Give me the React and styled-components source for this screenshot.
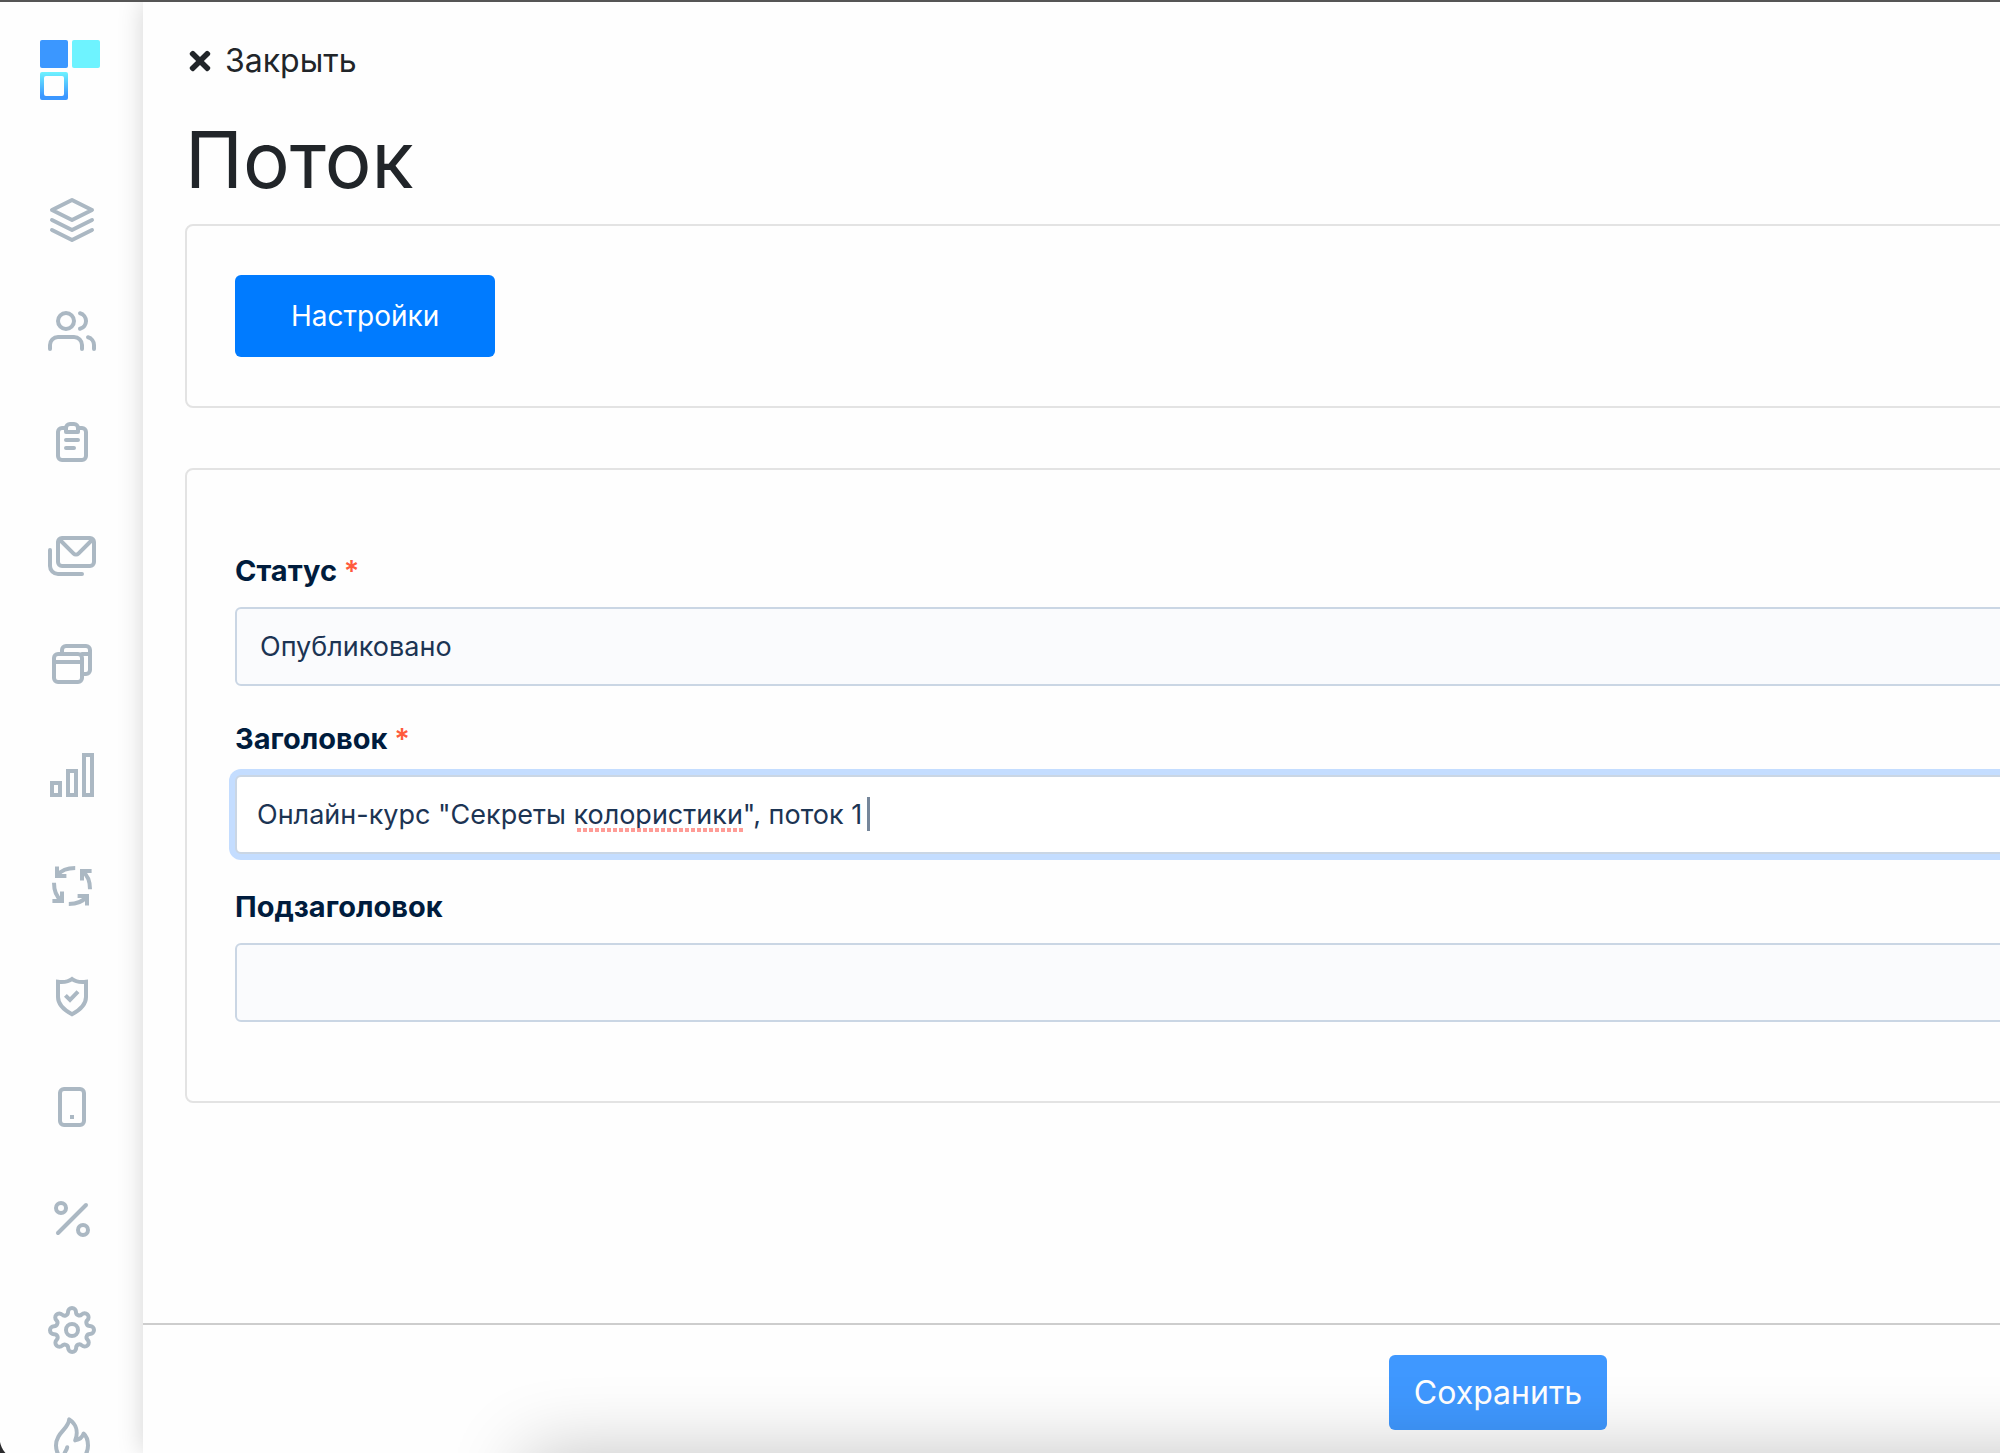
import React, { useState } from "react";
import styled, { createGlobalStyle } from "styled-components";
import { FiLayers, FiPercent, FiSettings, FiUsers } from "react-icons/fi";
import { FaTimes } from "react-icons/fa";

const GlobalStyle = createGlobalStyle`
  * {
    box-sizing: border-box;
  }

  body {
    margin: 0;
    overflow: hidden;
    background: #fefefe;
    color: #212529;
    font-family: Inter, "Liberation Sans", sans-serif;
  }
`;

const Icon = ({ children, cap = "round", join = "round" }) => (
  <svg
    viewBox="0 0 24 24"
    fill="none"
    stroke="currentColor"
    strokeWidth="2"
    strokeLinecap={cap}
    strokeLinejoin={join}
    aria-hidden="true"
  >
    {children}
  </svg>
);

const ClipboardIcon = () => (
  <Icon>
    <path d="M9 5H7a2 2 0 0 0-2 2v12a2 2 0 0 0 2 2h10a2 2 0 0 0 2-2V7a2 2 0 0 0-2-2h-2" />
    <path d="M9 7V5a2 2 0 0 1 2-2h2a2 2 0 0 1 2 2v2z" />
    <path d="M9 11h6M9 15h4" />
  </Icon>
);

const MailsIcon = () => (
  <Icon>
    <rect x="5" y="4.5" width="18" height="14" rx="2" />
    <path d="M6 5.5l6.8 6.8a1.7 1.7 0 0 0 2.4 0L22 5.5" />
    <path d="M1 10.5v8a4 4 0 0 0 4 4h12" />
  </Icon>
);

const WindowsIcon = () => (
  <Icon>
    <rect x="3" y="7" width="14" height="14" rx="2" />
    <path d="M3 11h14M17 7h4" />
    <path d="M7 7V5a2 2 0 0 1 2-2h10a2 2 0 0 1 2 2v10a2 2 0 0 1-2 2h-2" />
  </Icon>
);

const ChartIcon = () => (
  <Icon join="miter">
    <rect x="2" y="16" width="4" height="6" />
    <rect x="10" y="10" width="4" height="12" />
    <rect x="18" y="2" width="4" height="20" />
  </Icon>
);

const CycleIcon = () => (
  <Icon cap="butt" join="miter">
    {[0, 90, 180, 270].map((angle) => (
      <g key={angle} transform={`rotate(${angle} 12 12)`}>
        <path d="M4.5 2.2V7H9.2" />
        <path d="M4.8 6.6C6.6 4.2 9.8 3 13.6 3" />
      </g>
    ))}
  </Icon>
);

const ShieldIcon = () => (
  <Icon cap="butt" join="miter">
    <path d="M12 3C10.4 4.3 8 4.7 5 4.4V12c0 3.8 2.8 6.4 7 8.6 4.2-2.2 7-4.8 7-8.6V4.4C16 4.7 13.6 4.3 12 3z" />
    <path d="M8.700 11.200l2.300 2.300 4-4.200" />
  </Icon>
);

const PhoneIcon = () => (
  <Icon>
    <rect x="6" y="2.5" width="12" height="18" rx="2" />
    <rect x="11" y="15.5" width="2" height="2" fill="currentColor" stroke="none" />
  </Icon>
);

const FlameIcon = () => (
  <Icon>
    <path d="M10.6 1.2C10.4 6 4 7.700 4 14.300 4 19.200 7.500 22.500 12 22.500s8-3.300 8-8.200c0-2.500-.9-4.900-2.200-6-.6 1.800-2 3-4.200 3.400C15.200 7.500 14.200 3.500 10.600 1.200z" />
    <path d="M9.600 15.100C9.400 16.800 8 17.500 8 19.500c0 1.800 1.700 3 4 3" />
  </Icon>
);

const menu = [
  { label: "Курсы", icon: FiLayers },
  { label: "Пользователи", icon: FiUsers },
  { label: "Задания", icon: ClipboardIcon },
  { label: "Рассылки", icon: MailsIcon },
  { label: "Страницы", icon: WindowsIcon },
  { label: "Статистика", icon: ChartIcon },
  { label: "Процессы", icon: CycleIcon },
  { label: "Доступ", icon: ShieldIcon },
  { label: "Приложение", icon: PhoneIcon },
  { label: "Скидки", icon: FiPercent },
  { label: "Настройки", icon: FiSettings },
  { label: "Активность", icon: FlameIcon },
];

const Logo = () => (
  <LogoLink href="#" aria-label="Главная">
    <svg width="60" height="60" viewBox="0 0 60 60" aria-hidden="true">
      <defs>
        <linearGradient id="logoFrame" x1="0" y1="0" x2="0" y2="1">
          <stop offset="0" stopColor="#6ef3ff" />
          <stop offset="0.85" stopColor="#3b97ff" />
        </linearGradient>
      </defs>
      <rect width="28" height="28" rx="2" fill="#3b97ff" />
      <rect x="32" width="28" height="28" rx="2" fill="#6ef3ff" />
      <path
        fill="url(#logoFrame)"
        fillRule="evenodd"
        d="M2 32h24a2 2 0 0 1 2 2v24a2 2 0 0 1-2 2H2a2 2 0 0 1-2-2V34a2 2 0 0 1 2-2zm4 4a2 2 0 0 0-2 2v16a2 2 0 0 0 2 2h16a2 2 0 0 0 2-2V38a2 2 0 0 0-2-2z"
      />
    </svg>
  </LogoLink>
);

export default function App() {
  const [status, setStatus] = useState("published");
  const [title, setTitle] = useState('Онлайн-курс "Секреты колористики", поток 1');
  const [subtitle, setSubtitle] = useState("");

  return (
    <>
      <GlobalStyle />
      <Wrapper>
        <Sidebar>
          <Logo />
          <Menu>
            {menu.map(({ label, icon: MenuIcon }) => (
              <MenuLink href="#" key={label} aria-label={label}>
                <MenuIcon />
              </MenuLink>
            ))}
          </Menu>
        </Sidebar>

        <Page>
          <Content>
            <CloseLink href="#">
              <FaTimes />
              Закрыть
            </CloseLink>
            <Title>Поток</Title>

            <Card>
              <SettingsButton type="button">Настройки</SettingsButton>
            </Card>

            <FormCard id="stream" onSubmit={(e) => e.preventDefault()}>
              <Field>
                <Label htmlFor="status">
                  Статус <Required>*</Required>
                </Label>
                <Select
                  id="status"
                  value={status}
                  onChange={(e) => setStatus(e.target.value)}
                >
                  <option value="published">Опубликовано</option>
                </Select>
              </Field>

              <Field>
                <Label htmlFor="title">
                  Заголовок <Required>*</Required>
                </Label>
                <InputBox>
                  <Input
                    id="title"
                    $active
                    spellCheck={false}
                    value={title}
                    onChange={(e) => setTitle(e.target.value)}
                  />
                  <SpellMark />
                  <Caret />
                </InputBox>
              </Field>

              <Field>
                <Label htmlFor="subtitle">Подзаголовок</Label>
                <Input
                  id="subtitle"
                  value={subtitle}
                  onChange={(e) => setSubtitle(e.target.value)}
                />
              </Field>
            </FormCard>
          </Content>

          <Footer>
            <SaveButton type="submit" form="stream">
              Сохранить
            </SaveButton>
          </Footer>
        </Page>
      </Wrapper>
      <WindowShadow />
    </>
  );
}

const Wrapper = styled.div`
  position: relative;
  display: flex;
  height: 100vh;
  overflow: hidden;
  border-top: 2px solid #555;

  /* rounded corner of the window */
  &::after {
    content: "";
    position: absolute;
    left: 0;
    bottom: 0;
    width: 24px;
    height: 16px;
    background: radial-gradient(circle at 24px 0, transparent 24px, #2b2b2d 25px);
  }
`;

const Sidebar = styled.aside`
  flex: none;
  width: 143px;
  padding-top: 38px;
  overflow: hidden;
`;

const LogoLink = styled.a`
  display: block;
  width: 60px;
  height: 60px;
  margin: 0 auto 96px 40px;
`;

const Menu = styled.nav`
  display: flex;
  flex-direction: column;
  align-items: center;
  gap: 63px;
`;

const MenuLink = styled.a`
  width: 48px;
  height: 48px;
  color: #abb8c3;

  svg {
    display: block;
    width: 48px;
    height: 48px;
  }
`;

/* the editor is wider than the window and is cut off on the right */
const Page = styled.main`
  position: relative;
  flex: none;
  display: flex;
  flex-direction: column;
  width: calc(100% + 710px);
  background: #fefefe;
  box-shadow: 0 0 24px rgba(0, 0, 0, 0.17);
`;

const Content = styled.div`
  flex: 1;
  padding: 34px 42px 0;
`;

const CloseLink = styled.a`
  display: flex;
  align-items: center;
  gap: 10px;
  width: max-content;
  color: #212529;
  font-size: 32px;
  line-height: 50px;
  text-decoration: none;

  svg {
    font-size: 30px;
  }
`;

const Title = styled.h1`
  margin: 26px 0 16px;
  font-size: 78px;
  font-weight: 400;
  line-height: 96px;
`;

const Card = styled.section`
  padding: 49px 48px;
  border: 2px solid #e3e3e3;
  border-radius: 8px;
`;

const FormCard = styled.form`
  display: flex;
  flex-direction: column;
  gap: 33px;
  margin-top: 60px;
  padding: 81px 48px 79px;
  border: 2px solid #e3e3e3;
  border-radius: 8px;
`;

const Button = styled.button`
  display: block;
  border: 0;
  border-radius: 6px;
  color: #fff;
  font-family: inherit;
  cursor: pointer;
`;

const SettingsButton = styled(Button)`
  height: 82px;
  padding: 0 56px;
  background: #007bff;
  font-size: 28px;
`;

const SaveButton = styled(Button)`
  height: 75px;
  padding: 0 25px;
  background: #3f98ff;
  font-size: 32px;
`;

const Field = styled.div`
  display: flex;
  flex-direction: column;
  gap: 16px;
`;

const Label = styled.label`
  color: #001c3d;
  font-size: 29px;
  font-weight: 700;
  line-height: 40px;
`;

const Required = styled.span`
  color: #ff5a3c;
  font-weight: 600;
`;

const Select = styled.select`
  appearance: none;
  width: 100%;
  height: 79px;
  padding: 0 23px;
  border: 2px solid #cad6e4;
  border-radius: 6px;
  outline: 0;
  background: #fafbfd;
  color: #1c3453;
  font-family: inherit;
  font-size: 27px;
`;

const InputBox = styled.div`
  position: relative;
`;

const Input = styled.input`
  display: block;
  width: 100%;
  height: 79px;
  padding: 0 20px;
  border: 2px solid #cad6e4;
  border-radius: 6px;
  outline: 0;
  background: ${({ $active }) => ($active ? "#fff" : "#fafbfd")};
  box-shadow: ${({ $active }) => ($active ? "0 0 0 6px #c4ddff" : "none")};
  color: #1c3453;
  font-family: inherit;
  font-size: 27px;
`;

const SpellMark = styled.span`
  position: absolute;
  left: 342px;
  top: 53px;
  width: 168px;
  height: 4px;
  background: repeating-linear-gradient(90deg, #ff9c96 0 4px, transparent 4px 6px);
`;

const Caret = styled.span`
  position: absolute;
  left: 632px;
  top: 22px;
  width: 3px;
  height: 34px;
  background: #76879b;
`;

const Footer = styled.footer`
  flex: none;
  display: flex;
  justify-content: center;
  padding: 30px 0 23px;
  border-top: 2px solid #cdcdcd;
`;

/* soft shadow of the panel that sits just under the window */
const WindowShadow = styled.div`
  position: fixed;
  top: 100%;
  left: 525px;
  right: -200px;
  height: 200px;
  box-shadow: 0 0 76px rgba(0, 0, 0, 0.23);
  pointer-events: none;
`;
